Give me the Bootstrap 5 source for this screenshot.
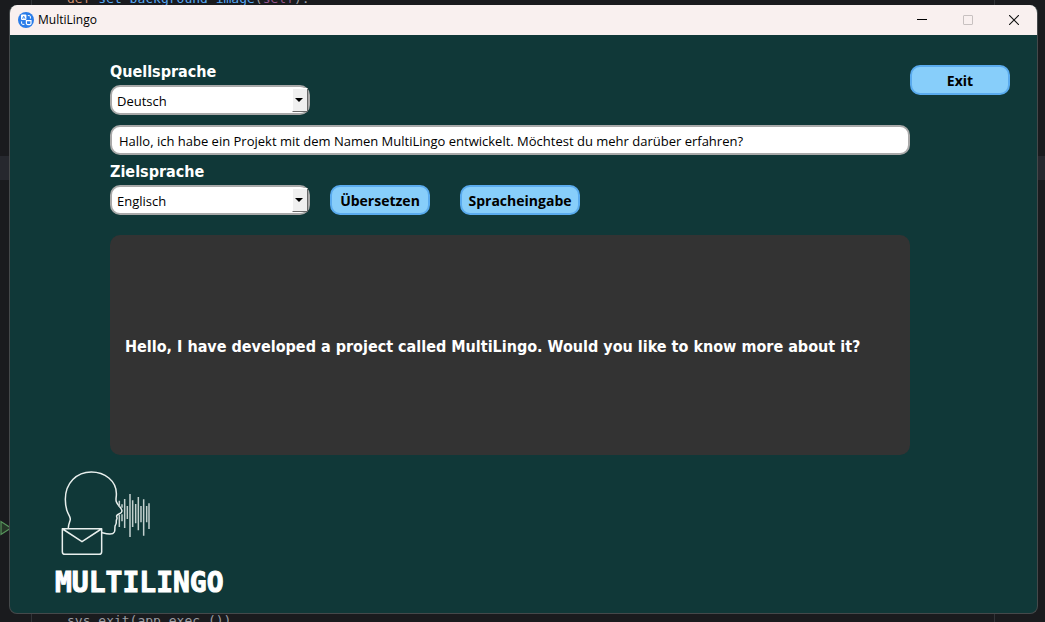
<!DOCTYPE html>
<html lang="de">
<head>
<meta charset="utf-8">
<meta name="viewport" content="width=device-width, initial-scale=1">
<title>MultiLingo</title>
<link href="https://cdn.jsdelivr.net/npm/bootstrap@5.3.0/dist/css/bootstrap.min.css" rel="stylesheet">
<style>
  body {
    font-family: "Open Sans", "Noto Sans", sans-serif;
    color: #000;
    /* editor behind the window: active line and margin guides */
    background:
      linear-gradient(#26282e, #26282e) 0 156px / 100% 24px no-repeat,
      linear-gradient(#313438, #313438) 31px 0 / 1px 100% no-repeat,
      linear-gradient(#313438, #313438) right 50px top 0 / 1px 100% no-repeat,
      #1a1b1e;
  }
  .code-strip {
    font: 13px/14px "DejaVu Sans Mono", monospace;
    padding-left: 67px;
    white-space: pre;
    color: #9a9da3;
  }
  .code-above { height: 5px; line-height: 12px; }
  .code-below { height: 8px; }
  .kw { color: #cf8e6d; }
  .fn { color: #56a8f5; }
  .me { color: #94558d; }
  .gutter-left { width: 9px; padding-top: 515px; }
  .gutter-right { width: 7px; }
  .app-window {
    background: #103838;
    border: 1px solid #45494b;
    border-top: 0;
    border-radius: 8px;
  }
  .title-bar { height: 30px; background: #f9f0ef; font-size: 12px; padding-left: 8px; }
  .win-btn { width: 46px; height: 30px; border: 0; background: none; padding: 0; }
  .work-area { padding: 26px 27px 0 100px; }
  .field-label {
    font: bold 16px/22px "DejaVu Sans Condensed", "DejaVu Sans", sans-serif;
    color: #fff;
    margin-bottom: 2px;
  }
  .target-label { margin-top: 6px; }
  .lang-picker { width: 200px; }
  .lang-picker::after {
    content: "";
    position: absolute;
    top: 3px; right: 2px; bottom: 3px;
    width: 16px;
    background: #f0f0f0;
    border: solid #fff;
    border-width: 1px 1px 1px 1px;
    border-right-color: #696969;
    border-bottom-color: #696969;
    pointer-events: none;
  }
  .lang-picker svg { position: absolute; right: 7px; top: 13px; z-index: 1; pointer-events: none; }
  .form-field {
    height: 30px;
    font-size: 13px;
    line-height: 20px;
    color: #000;
    background: #fff;
    border: 2px solid #a9a9a9;
    border-radius: 10px;
    padding: 4px 7px 2px;
  }
  .lang-picker select { appearance: none; width: 100%; padding-left: 5px; }
  .source-text { margin-top: 10px; }
  .btn-sky {
    --bs-btn-bg: #87cefa;
    --bs-btn-color: #000;
    --bs-btn-border-color: #5aabee;
    --bs-btn-hover-bg: #9ad7fb;
    --bs-btn-hover-border-color: #5aabee;
    --bs-btn-border-width: 2px;
    --bs-btn-border-radius: 10px;
    --bs-btn-padding-x: 0;
    --bs-btn-padding-y: 0;
    font-size: 14px;
    font-weight: 700;
    width: 100px;
    height: 30px;
  }
  .btn-voice { width: 120px; }
  .translate-btn { margin: 0 30px 0 20px; }
  .exit-btn { margin-top: 4px; }
  .result-box {
    min-height: 220px;
    background: #333;
    border-radius: 10px;
    color: #fff;
    padding: 3px 15px 0;
    margin-top: 20px;
    font: bold 16px/20px "DejaVu Sans Condensed", "DejaVu Sans", sans-serif;
  }
  .brand-block { padding: 10px 0 13px 40px; }
  .brand-word {
    font: bold 28px/34px "DejaVu Sans Mono", monospace;
    color: #fff;
    -webkit-text-stroke: 1px #fff;
    padding-left: 5px;
    margin-top: 6px;
  }
</style>
</head>
<body class="min-vh-100 d-flex flex-column m-0">
  <div class="code-strip code-above d-flex align-items-end overflow-hidden"><span class="kw">def </span><span class="fn">set_background_image</span>(<span class="me">self</span>):</div>

  <div class="d-flex flex-grow-1">
    <div class="gutter-left flex-shrink-0 overflow-hidden">
      <svg class="d-block" width="12" height="16" viewBox="0 0 12 16" aria-hidden="true"><path d="M1 1.5V14.5L11 8Z" fill="#253627" stroke="#57965c" stroke-width="1.2"/></svg>
    </div>

    <div class="app-window flex-grow-1 overflow-hidden">
      <header class="title-bar d-flex align-items-center">
        <svg width="16" height="16" viewBox="0 0 16 16" class="flex-shrink-0" aria-hidden="true">
          <circle cx="8" cy="8" r="8" fill="#2b7de9"/>
          <rect x="3" y="2.600" width="5.400" height="5.400" rx="1" fill="#fff"/>
          <path d="M4.400 6.800 5.700 4l1.300 2.800M4.800 5.900h1.800" stroke="#2b7de9" stroke-width=".7" fill="none"/>
          <path d="M8.400 8.600h4.600v2.600a1.400 1.400 0 0 1-1.400 1.400H9.800a1.400 1.400 0 0 1-1.400-1.400Z" fill="#2b7de9" stroke="#fff" stroke-width="1.200"/>
          <path d="M9.800 3.600h1.400a1.200 1.200 0 0 1 1.200 1.200v1.800M3.600 9.400v1.800a1.200 1.200 0 0 0 1.200 1.200h1.600" stroke="#fff" fill="none"/>
        </svg>
        <span class="ps-1 me-auto">MultiLingo</span>
        <button class="win-btn" type="button" aria-label="Minimieren"><svg class="d-block mx-auto" width="10" height="10" viewBox="0 0 10 10"><path d="M0 4.500h10" stroke="#000"/></svg></button>
        <button class="win-btn" type="button" aria-label="Maximieren" disabled><svg class="d-block mx-auto" width="10" height="10" viewBox="0 0 10 10"><rect x=".5" y=".5" width="9" height="9" rx=".5" fill="none" stroke="#c8c1c0"/></svg></button>
        <button class="win-btn" type="button" aria-label="Schließen"><svg class="d-block mx-auto" width="10" height="10" viewBox="0 0 10 10"><path d="M0 0l10 10M10 0L0 10" stroke="#111" stroke-width="1.100"/></svg></button>
      </header>

      <main class="work-area d-flex align-items-start">
        <form class="flex-grow-1">
          <label class="field-label d-block" for="source-lang">Quellsprache</label>
          <div class="lang-picker position-relative">
            <select class="form-field d-block" id="source-lang"><option>Deutsch</option><option>Englisch</option></select>
            <svg width="8" height="4" viewBox="0 0 8 4" aria-hidden="true"><path d="M0 0h8L4 4Z"/></svg>
          </div>

          <input class="form-field source-text d-block w-100" type="text" aria-label="Text" value="Hallo, ich habe ein Projekt mit dem Namen MultiLingo entwickelt. Möchtest du mehr darüber erfahren?">

          <label class="field-label target-label d-block" for="target-lang">Zielsprache</label>
          <div class="d-flex flex-wrap">
            <div class="lang-picker position-relative">
              <select class="form-field d-block" id="target-lang"><option>Englisch</option><option>Deutsch</option></select>
              <svg width="8" height="4" viewBox="0 0 8 4" aria-hidden="true"><path d="M0 0h8L4 4Z"/></svg>
            </div>
            <button class="btn btn-sky translate-btn" type="button">Übersetzen</button>
            <button class="btn btn-sky btn-voice" type="button">Spracheingabe</button>
          </div>

          <output class="result-box d-flex align-items-center" for="target-lang">Hello, I have developed a project called MultiLingo. Would you like to know more about it?</output>
        </form>
        <button class="btn btn-sky exit-btn flex-shrink-0" type="button">Exit</button>
      </main>

      <div class="brand-block">
        <svg class="d-block" width="110" height="95" viewBox="0 0 330 285" fill="none" stroke="#e8efed" stroke-width="4.500" stroke-linejoin="round" stroke-linecap="round" aria-hidden="true">
          <path d="M55 188C55 176 61 169 61 162C61 154 54 148 51 137C47 125 46 115 46 103C46 54 80 21 124 21C165 21 198 48 199 84C200 96 196 102 199 110C202 120 216 130 216 138C216 146 202 147 200 152C199 157 203 158 200 163C197 169 201 173 197 179C192 186 197 192 193 201C188 211 172 207 157 203"/>
          <path d="M37 191H155V260Q155 268 147 268H45Q37 268 37 260ZM38 192L96 230L154 192"/>
          <path stroke-linecap="butt" stroke="#c3d0ce" d="M208 107V126M208 150V186M216 118V128M216 148V169M224 102V189M232 123V162M240 87V216M248 106V186M257 117V175M265 96V196M273 123V172M281 103V212M290 123V172M297 115V192"/>
        </svg>
        <div class="brand-word">MULTILINGO</div>
      </div>
    </div>

    <div class="gutter-right flex-shrink-0"></div>
  </div>

  <div class="code-strip code-below overflow-hidden">sys.exit(app.exec_())</div>
  <script src="https://cdn.jsdelivr.net/npm/bootstrap@5.3.0/dist/js/bootstrap.bundle.min.js"></script>
</body>
</html>
